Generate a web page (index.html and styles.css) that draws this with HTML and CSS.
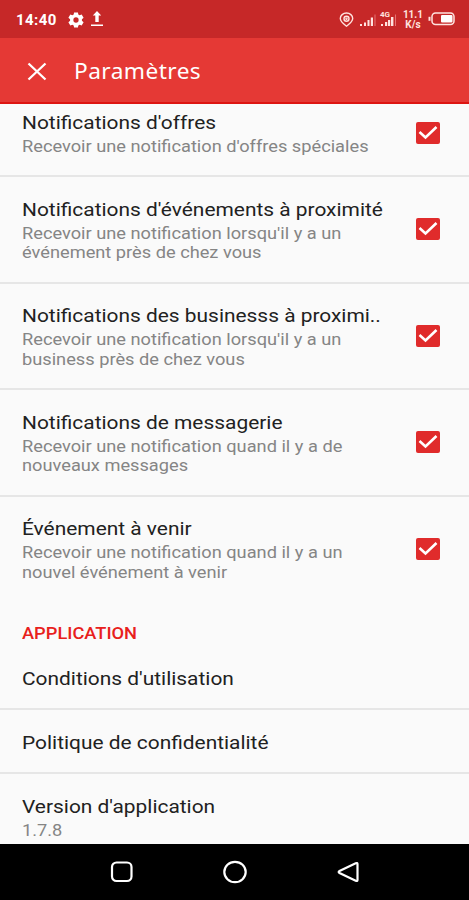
FILE: index.html
```html
<!DOCTYPE html>
<html lang="fr">
<head>
    <meta charset="UTF-8">
    <meta name="viewport" content="width=device-width, initial-scale=1.0">
    <title>Paramètres</title>
    <link rel="stylesheet" href="styles.css">
</head>
<body>
    <div class="status-bar">
        <span class="time">14:40</span>
        <svg class="gear" width="16" height="16" viewBox="2 2 20 20"><path fill="#fff" fill-rule="evenodd" d="M9.600 2.500h4.800l.5 2.700 1.600.9 2.600-.9 2.400 4.100-2.100 1.800v1.800l2.100 1.800-2.400 4.100-2.600-.9-1.600.9-.5 2.700H9.600l-.5-2.700-1.600-.9-2.600.9-2.400-4.100 2.100-1.800v-1.800L2.500 9.300l2.400-4.100 2.600.9 1.600-.9zM12 8.700a3.300 3.300 0 1 0 0 6.600 3.300 3.300 0 0 0 0-6.600z"/></svg>
        <svg class="upload" width="14" height="16" viewBox="0 0 14 16"><path fill="#fff" d="M7 0L11.200 4.500H8.700V11H5.300V4.500H2.800zM1 13.500h12v1.500H1z"/></svg>
        <div class="status-right">
            <svg class="pin" width="15" height="16" viewBox="0 0 15 16" fill="none" stroke="#ffe3df" stroke-width="1.4"><path d="M7.500 14.200C3.800 11.500 1.300 9.300 1.300 6.500a6.200 5.500 0 0 1 12.400 0c0 2.800-2.500 5-6.200 7.700z"/><circle cx="7.500" cy="6.700" r="2.500"/><circle cx="7.500" cy="6.700" r=".5"/></svg>
            <svg class="signal" width="17" height="16" viewBox="0 0 17 16"><path fill="#ffe3df" d="M0 12h2v2H0zM4 10.500h2V14H4zM7.500 8h2v6h-2zM10.800 5.500H13V14h-2.200z"/><path fill="#e57373" d="M14.500 2.500h1V14h-1z"/></svg>
            <div class="signal-4g">
                <span class="net">4G</span>
                <svg width="17" height="16" viewBox="0 0 17 16"><path fill="#ffe3df" d="M1 12h2v2H1zM5 10h2.200v4H5zM8 8h2.200v6H8zM11 5h2.400v9H11z"/><path fill="#e57373" d="M15 2.500h1V14h-1z"/></svg>
            </div>
            <div class="speed">11.1<br>K/s</div>
            <svg width="27" height="14" viewBox="0 0 27 14"><rect x="4" y="1" width="22" height="11.500" rx="3.500" fill="none" stroke="#ffe3df" stroke-width="1.500"/><path fill="#ffe3df" d="M.5 4.800h2v4h-2z"/><rect x="13" y="3" width="11.500" height="7.500" rx="1" fill="#fff"/></svg>
        </div>
    </div>

    <div class="toolbar">
        <svg class="close" width="20" height="20" viewBox="0 0 20 20"><path d="M1.500 2.500l17 16M18.500 2.500l-17 16" stroke="#fff" stroke-width="2.300"/></svg>
        <h1>Paramètres</h1>
    </div>

    <div class="content">
        <div class="row first">
            <div class="text">
                <div class="title">Notifications d'offres</div>
                <div class="sub">Recevoir une notification d'offres spéciales</div>
            </div>
            <svg class="check" viewBox="0 0 24 22"><rect width="24" height="22" rx="2"/><path d="M3.500 10l6 5.500L20.500 5"/></svg>
        </div>
        <div class="row">
            <div class="text">
                <div class="title">Notifications d'événements à proximité</div>
                <div class="sub">Recevoir une notification lorsqu'il y a un<br>événement près de chez vous</div>
            </div>
            <svg class="check" viewBox="0 0 24 22"><rect width="24" height="22" rx="2"/><path d="M3.500 10l6 5.500L20.500 5"/></svg>
        </div>
        <div class="row">
            <div class="text">
                <div class="title">Notifications des businesss à proximi..</div>
                <div class="sub">Recevoir une notification lorsqu'il y a un<br>business près de chez vous</div>
            </div>
            <svg class="check" viewBox="0 0 24 22"><rect width="24" height="22" rx="2"/><path d="M3.500 10l6 5.500L20.500 5"/></svg>
        </div>
        <div class="row">
            <div class="text">
                <div class="title">Notifications de messagerie</div>
                <div class="sub">Recevoir une notification quand il y a de<br>nouveaux messages</div>
            </div>
            <svg class="check" viewBox="0 0 24 22"><rect width="24" height="22" rx="2"/><path d="M3.500 10l6 5.500L20.500 5"/></svg>
        </div>
        <div class="row last">
            <div class="text">
                <div class="title">Événement à venir</div>
                <div class="sub">Recevoir une notification quand il y a un<br>nouvel événement à venir</div>
            </div>
            <svg class="check" viewBox="0 0 24 22"><rect width="24" height="22" rx="2"/><path d="M3.500 10l6 5.500L20.500 5"/></svg>
        </div>

        <h2>APPLICATION</h2>
        <div class="row link">
            <div class="title">Conditions d'utilisation</div>
        </div>
        <div class="row link">
            <div class="title">Politique de confidentialité</div>
        </div>
        <div class="row last version">
            <div class="text">
                <div class="title">Version d'application</div>
                <div class="sub">1.7.8</div>
            </div>
        </div>
    </div>

    <div class="nav-bar">
        <svg width="24" height="24" viewBox="0 0 24 24"><rect x="2" y="2.500" width="19.500" height="18.500" rx="4.500"/></svg>
        <svg width="24" height="24" viewBox="0 0 24 24"><ellipse cx="12" cy="12" rx="10.700" ry="10.200"/></svg>
        <svg width="24" height="24" viewBox="0 0 24 24"><path d="M21.500 4v16q0 1.500-1.800.8L3.500 13q-1.700-1 0-2L19.700 3.200q1.800-.7 1.800.8z"/></svg>
    </div>
</body>
</html>
```

FILE: styles.css
```css
* {
    box-sizing: border-box;
}

body {
    margin: 0;
    height: 900px;
    display: flex;
    flex-direction: column;
    overflow: hidden;
    background-color: #fafafa;
    font-family: Roboto, sans-serif;
}

.status-bar {
    flex: none;
    height: 38px;
    display: flex;
    align-items: center;
    padding: 0 14px 0 16px;
    background-color: #c62828;
    color: #fff;
}

.time {
    width: 52px;
    padding-top: 2px;
    font-size: 15px;
    font-weight: 700;
    letter-spacing: 0.4px;
}

.gear {
    margin-top: 1px;
}

.upload {
    margin-left: 6px;
}

.status-right {
    margin-left: auto;
    display: flex;
    align-items: center;
    color: #ffe3df;
}

.pin,
.signal,
.signal-4g {
    margin-top: 2px;
}

.signal {
    margin-left: 6px;
}

.signal-4g {
    position: relative;
    height: 16px;
    margin-left: 3px;
}

.net {
    position: absolute;
    top: -2px;
    left: 0;
    font-size: 8px;
    font-weight: 700;
}

.speed {
    margin: 0 5px 0 6px;
    padding-top: 2px;
    font-size: 10px;
    font-weight: 700;
    line-height: 10px;
    text-align: center;
}

.toolbar {
    flex: none;
    height: 66px;
    display: flex;
    align-items: center;
    padding: 2px 0 0 27px;
    background-color: #e53935;
    border-bottom: 2px solid #dd1512;
    color: #fff;
}

h1 {
    margin: 0 0 0 27px;
    font-family: "Noto Sans", sans-serif;
    font-size: 21px;
    font-weight: 400;
    letter-spacing: 0.4px;
    transform: scaleX(1.08);
    transform-origin: left;
}

.content {
    flex: 1;
    min-height: 0;
    overflow: hidden;
}

.row {
    display: flex;
    align-items: center;
    justify-content: space-between;
    height: 106.6px;
    padding: 0 29px 0 22px;
    border-bottom: 2px solid #e6e6e6;
}

.first {
    height: 87px;
    margin-top: -14px;
}

.last {
    padding-bottom: 2px;
    border-bottom: none;
}

.link {
    height: 64px;
    padding-top: 3px;
}

.version {
    height: 88px;
    padding-bottom: 4px;
}

.text {
    padding-top: 1px;
}

/* wide text, keeps the fi ligature */
.title,
.sub,
h2 {
    transform: scaleX(1.1);
    transform-origin: left;
    white-space: nowrap;
}

.title {
    font-size: 19px;
    line-height: 26px;
    color: #212121;
}

.sub {
    padding-top: 1px;
    font-size: 16px;
    line-height: 19.7px;
    color: #858585;
    transform: scaleX(1.139);
}

.check {
    flex: none;
    width: 24px;
    height: 22px;
}

.check rect {
    fill: #e02b2b;
}

.check path {
    fill: none;
    stroke: #fff;
    stroke-width: 2.6;
}

h2 {
    margin: 0 0 0 22px;
    padding-top: 20px;
    height: 43px;
    font-size: 16px;
    font-weight: 500;
    line-height: 22px;
    color: #e8201c;
    transform: scaleX(1.14);
}

.nav-bar {
    flex: none;
    height: 56px;
    display: flex;
    justify-content: center;
    align-items: center;
    gap: 89px;
    background-color: #000;
}

.nav-bar svg {
    fill: none;
    stroke: #fff;
    stroke-width: 2.2;
}
```
